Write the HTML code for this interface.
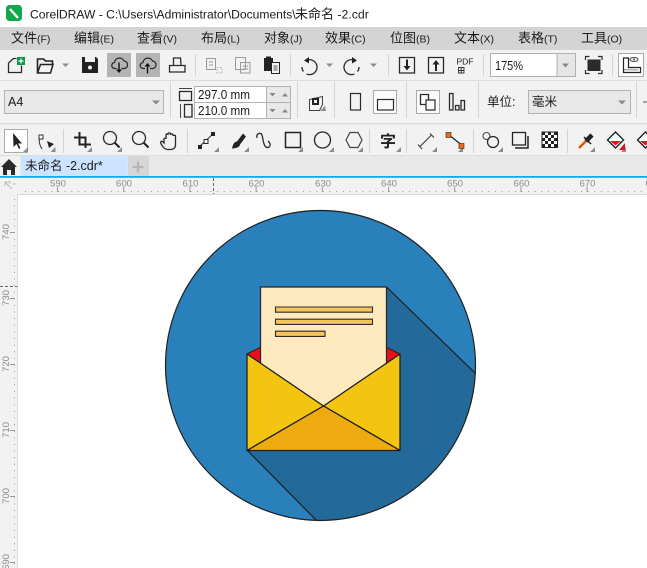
<!DOCTYPE html>
<html><head><meta charset="utf-8">
<style>
html,body{margin:0;padding:0;background:#fff;width:647px;height:568px;overflow:hidden}
svg{display:block}
text{font-family:"Liberation Sans","Noto Sans CJK SC",sans-serif;fill:#1a1a1a}
.m{font-size:13px}
.m tspan{font-size:10.5px}
.r{font-size:9.6px;fill:#8a8a94}
.f{fill:none;stroke:#2a2a2a;stroke-width:1.3}
.g{fill:none;stroke:#9a9a9a;stroke-width:1}
</style></head><body>
<svg width="647" height="568" viewBox="0 0 647 568" xmlns="http://www.w3.org/2000/svg">
<defs><clipPath id="c"><circle cx="320.5" cy="365.5" r="155"/></clipPath>
<pattern id="chk" width="6" height="6" patternUnits="userSpaceOnUse" x="542" y="132"><rect width="6" height="6" fill="#fff"/><rect width="3" height="3" fill="#222"/><rect x="3" y="3" width="3" height="3" fill="#222"/></pattern></defs>
<rect width="647" height="568" fill="#fff"/>

<!-- title bar -->
<rect x="6" y="5" width="16" height="16" rx="3.5" fill="#11a84a"/>
<path d="M10 9l8 9" stroke="#fff" stroke-width="2.4"/>
<text x="30" y="18.500" font-size="12.1">CorelDRAW - C:\Users\Administrator\Documents\</text>
<text x="295" y="18.500" font-size="13">未命名</text>
<text x="334" y="18.500" font-size="12.300" xml:space="preserve"> -2.cdr</text>

<!-- menu -->
<rect y="27" width="647" height="23" fill="#d4d4d4"/>
<text class="m" x="11" y="42.500">文件<tspan>(F)</tspan></text>
<text class="m" x="74" y="42.500">编辑<tspan>(E)</tspan></text>
<text class="m" x="137" y="42.500">查看<tspan>(V)</tspan></text>
<text class="m" x="201" y="42.500">布局<tspan>(L)</tspan></text>
<text class="m" x="264" y="42.500">对象<tspan>(J)</tspan></text>
<text class="m" x="325" y="42.500">效果<tspan>(C)</tspan></text>
<text class="m" x="390" y="42.500">位图<tspan>(B)</tspan></text>
<text class="m" x="454" y="42.500">文本<tspan>(X)</tspan></text>
<text class="m" x="518" y="42.500">表格<tspan>(T)</tspan></text>
<text class="m" x="581" y="42.500">工具<tspan>(O)</tspan></text>

<!-- toolbars bg -->
<rect y="50" width="647" height="105" fill="#f2f2f2"/>
<rect y="80" width="647" height="1" fill="#dcdcdc"/>
<rect y="123" width="647" height="1.500" fill="#dcdcdc"/>
<rect y="155" width="647" height="1" fill="#dcdcdc"/>

<!-- separators -->
<path d="M195.500 54v22M290.500 54v22M388.500 54v22M483.500 54v22M612.500 54v22M170.500 82v36M297.500 82v36M334.500 82v36M406.500 82v36M478.500 82v36M636.500 82v36M63.500 129v24M187.500 129v24M369.500 129v24M406.500 129v24M473.500 129v24M567.500 129v24" stroke="#d2d2d2" stroke-width="1" fill="none"/>

<!-- row 1 -->
<path class="f" d="M8.500 63l5-4.500h3M8.500 63v9.500h13v-7"/>
<rect x="17" y="57" width="8" height="8" fill="#0a9a48"/><path d="M21 58.500v5M18.500 61h5" stroke="#fff" stroke-width="1.200"/>
<path d="M37.500 73V59h6l2 2h7v3" fill="none" stroke="#222" stroke-width="1.600"/><path d="M37.500 73l3-8.500h12.500l-2.500 8.500z" fill="#f2f2f2" stroke="#222" stroke-width="1.500"/>
<path d="M62 63.500h7l-3.500 3.500z" fill="#8a8a8a"/>
<path d="M82 57h14l2 2v14H82z" fill="#222"/><rect x="85" y="57" width="10" height="5" fill="#f2f2f2"/><circle cx="90" cy="67.500" r="2" fill="#f2f2f2"/>
<rect x="107" y="53" width="24" height="24" fill="#b4b4b4"/>
<rect x="136" y="53" width="24" height="24" fill="#b4b4b4"/>
<g transform="translate(.5,1.500)"><path class="f" d="M116 67h-1.500a3 3 0 0 1 -.5-6a5 5 0 0 1 9.500-1.500a3.800 3.800 0 0 1 .5 7.500h-3"/>
<path d="M118.500 61v9" stroke="#111" stroke-width="1.400"/><path d="M115.500 68l3 3.500 3-3.500z" fill="#111"/></g>
<g transform="translate(29,1.500)"><path class="f" d="M116 67h-1.500a3 3 0 0 1 -.5-6a5 5 0 0 1 9.500-1.500a3.800 3.800 0 0 1 .5 7.500h-3"/>
<path d="M118.500 63v9" stroke="#111" stroke-width="1.400"/><path d="M115.500 65l3-3.500 3 3.500z" fill="#111"/></g>
<path class="f" d="M173.500 65v-7h7l.5 7M169.500 65.500h15.500v6.500h-15.500z"/>
<path class="g" d="M206.500 58.500h9v11h-9zM209 62h4M209 65h4"/><path d="M217 67.500h5v5.500h-5z" fill="none" stroke="#aaa" stroke-dasharray="1.500 1.500"/>
<path class="g" d="M235.500 57.500h10v12h-10zM240.500 62.500h9.500v10.500h-9.500zM243 66h5M243 69h5"/>
<rect x="264" y="58" width="9" height="13" fill="#222"/><rect x="266" y="56.500" width="5" height="3" fill="#222"/>
<rect x="271.500" y="62.500" width="8" height="11" fill="#f2f2f2" stroke="#222"/><path d="M273.500 66h4M273.500 68h4M273.500 70h4" stroke="#222" stroke-width=".8"/>
<path class="f" d="M306 60.500a7.500 7.500 0 1 1 -4 6.500" stroke-dasharray="30 4"/><path d="M309 57l-5 3.500 5 3z" fill="#222"/>
<path d="M326 63.500h7l-3.500 3.500z" fill="#8a8a8a"/>
<path class="f" d="M355 60.500a7.500 7.500 0 1 0 4 6.500" stroke-dasharray="30 4"/><path d="M352 57l5 3.500-5 3z" fill="#222"/>
<path d="M370 63.500h7l-3.500 3.500z" fill="#8a8a8a"/>
<path class="f" d="M399.500 57.500h15v15.500h-15z"/><path d="M407 59.500v8" stroke="#222" stroke-width="2"/><path d="M403.500 66l3.500 4.500 3.500-4.500z" fill="#222"/>
<path class="f" d="M428.500 57.500h15v15.500h-15z"/><path d="M436 63v8" stroke="#222" stroke-width="2"/><path d="M432.500 64.500l3.500-4.500 3.500 4.500z" fill="#222"/>
<text x="456.500" y="64.500" font-size="8.500">PDF</text><path d="M458.500 67.500h5.500v5.500h-5.500zM461.200 67.500v5.500M458.500 70.500h5.500" fill="none" stroke="#333" stroke-width=".9"/>
<rect x="490.500" y="53.500" width="85" height="23" fill="#fff" stroke="#b0b0b0"/><rect x="557" y="54" width="18" height="22" fill="#e6e6e6"/><path d="M557 54v22" stroke="#b0b0b0"/>
<path d="M562 63.500h7l-3.500 4z" fill="#888"/>
<text x="495" y="70" font-size="12.500" textLength="28" lengthAdjust="spacingAndGlyphs">175%</text>
<rect x="587.500" y="59.500" width="13" height="11.500" fill="#2a2a2a"/><path d="M585.500 60v-3.500h4M598 56.500h4v3.500M585.500 70v3.500h4M598 73.500h4V70" fill="none" stroke="#2a2a2a" stroke-width="1.200"/>
<rect x="618.500" y="53.500" width="25" height="23" fill="#fdfdfd" stroke="#aaa"/>
<path d="M623.500 58v14.500h17v-5h-12v-9.500z" fill="none" stroke="#222" stroke-width="1.200"/><path d="M625 70.500v-1.500M627 70.500v-1.500M629 70.500v-1.500M631 70.500v-1.500M633 70.500v-1.500M635 70.500v-1.500M637 70.500v-1.500" stroke="#222" stroke-width=".7"/><ellipse cx="634" cy="59.500" rx="4" ry="2" fill="none" stroke="#444"/><circle cx="634" cy="59.500" r="1" fill="#444"/>

<!-- row 2 -->
<rect x="4.500" y="90.500" width="159" height="23" fill="#e8e8e8" stroke="#b2b2b2"/>
<text x="8" y="106" font-size="12.500">A4</text>
<path d="M152 100.500h8l-4 4z" fill="#888"/>
<path class="f" d="M179.500 91.500h12v9h-12z"/><path d="M179 88.500h13" stroke="#444"/>
<path class="f" d="M184.500 104.500h7.500v12.500h-7.500z"/><path d="M180.500 104v14" stroke="#444"/>
<rect x="194.500" y="86.500" width="96" height="32" fill="#e8e8e8" stroke="#b2b2b2"/>
<rect x="195" y="87" width="71" height="15" fill="#fff"/><rect x="195" y="103" width="71" height="15" fill="#fff"/>
<path d="M195 102.500h95M266.500 87v31" stroke="#b2b2b2"/>
<text x="198" y="99" font-size="12.500" textLength="52" lengthAdjust="spacingAndGlyphs">297.0 mm</text>
<text x="198" y="115" font-size="12.500" textLength="52" lengthAdjust="spacingAndGlyphs">210.0 mm</text>
<path d="M269.500 93h6l-3 3.500zM269.500 109h6l-3 3.500z" fill="#888"/><path d="M282 96.500h6l-3-3.500zM282 112.500h6l-3-3.500z" fill="#888"/>
<path d="M309.500 99.500l13-3v8l-3 6h-10z" fill="none" stroke="#444"/><rect x="312" y="98" width="7" height="7" fill="#222"/><rect x="314" y="100" width="3" height="3" fill="#f2f2f2"/>
<path d="M320 111l5-5 1 5z" fill="#8c8c8c"/>
<rect x="350.500" y="93.500" width="10" height="16.500" fill="none" stroke="#2a2a2a" stroke-width="1.200"/>
<rect x="373.500" y="90.500" width="23" height="23" fill="#fbfbfb" stroke="#aaa"/>
<rect x="377.500" y="99.500" width="16" height="10.500" fill="none" stroke="#2a2a2a" stroke-width="1.200"/>
<rect x="416.500" y="90.500" width="23" height="23" fill="#fbfbfb" stroke="#aaa"/>
<path class="f" d="M420.500 94.500h8v10h-8z"/><path d="M426 100h9v10h-9z" fill="#fbfbfb" stroke="#2a2a2a" stroke-width="1.200"/>
<path class="f" d="M449.500 93.500h3.500v16.500h-3.500zM455.500 105.500h3.500v4.500h-3.500zM461 100.500h3.500v9.500H461z"/>
<text x="487" y="106" font-size="12.500">单位:</text>
<rect x="528.500" y="90.500" width="102" height="23" fill="#e8e8e8" stroke="#b2b2b2"/>
<text x="532" y="106" font-size="12.500">毫米</text>
<path d="M618 100.500h8l-4 4z" fill="#888"/>
<path d="M643 102h4" stroke="#555"/>

<!-- row 3 -->
<rect x="4.500" y="129.500" width="23" height="23" fill="#fff" stroke="#aaa"/>
<path d="M13 133l.500 14 3-3 2.500 5 1.500-1-2.500-4.500h4z" fill="#222"/>
<g fill="#8c8c8c">
<path d="M23 152l5-5v5zM50.500 152l5-5v5zM87 152l5-5v5zM117 152l5-5v5zM214 152l5-5v5zM244 152l5-5v5zM298 152l5-5v5zM329 152l5-5v5zM358 152l5-5v5zM396 152l5-5v5zM432 152l5-5v5zM458 152l5-5v5zM498 152l5-5v5zM590 152l5-5v5zM621 152l5-5v5z"/>
</g>
<path d="M40 137c-1.500 3-1 7 2 12" fill="none" stroke="#333"/><rect x="39" y="135" width="4" height="4" fill="#fff" stroke="#333"/><path d="M47 141l7 3-5 4z" fill="#222"/>
<path d="M74 137.500H85.500V148M79.500 132V144.500H91" fill="none" stroke="#222" stroke-width="2"/>
<circle cx="110" cy="138" r="6.500" class="f"/><path d="M114.500 142.500l5 5" stroke="#222" stroke-width="2"/>
<circle cx="139" cy="138" r="6.500" class="f"/><path d="M143.500 142.500l5 5" stroke="#222" stroke-width="2"/>
<path class="f" transform="translate(-1,0)" d="M165 143v-4c0-1 2-1 2 0v-4c0-1.500 2-1.500 2 0v-1c0-1.500 2.500-1.500 2.500 0v1c0-1.500 2.500-1.500 2.500 0v1c0-1 2.500-1 2.500 0v9c0 3-2.500 4.500-5 4.500h-3c-3 0-6-4-7-7 0-1 1-1.500 2-1z"/>
<path d="M199 147l15-14" stroke="#333"/><rect x="198" y="145" width="4" height="4" fill="#222"/><rect x="204" y="139.500" width="4" height="4" fill="#fff" stroke="#222"/><rect x="211" y="132" width="4" height="4" fill="#222"/>
<path d="M243 133.500l-6 8c-2 0-4 2-5 7 5 0 8-2 8-4l6-8z" fill="#222"/>
<path class="f" d="M257 138c-1-5 4-6 5-3 1 3 1 8 3 11 2 3 6 1 5-2 0-1-1-2-2-3" stroke-width="1.500"/>
<rect x="285.500" y="132.500" width="15" height="15" fill="none" stroke="#222" stroke-width="1.500"/>
<circle cx="322.500" cy="140" r="8" fill="none" stroke="#222" stroke-width="1.300"/>
<path d="M346 140l4-7.500h8l4 7.500-4 7.500h-8z" fill="none" stroke="#444" stroke-width="1.200"/>
<text x="380" y="147" font-size="16" font-weight="bold" style="fill:#222">字</text>
<path d="M419.500 147l12-12M418 144.500l4 4.500M430 133.500l4 4" stroke="#444" stroke-width="1.200"/>
<path d="M449 135l14 11" stroke="#222" stroke-width="1.200"/><rect x="446" y="132.500" width="5" height="5" fill="#f26c0d" stroke="#222" stroke-width=".6"/><rect x="459" y="143.500" width="5" height="5" fill="#f26c0d" stroke="#222" stroke-width=".6"/>
<circle cx="486.500" cy="136" r="3.500" fill="none" stroke="#444"/><circle cx="493" cy="142" r="5.500" fill="#f2f2f2" stroke="#222" stroke-width="1.200"/>
<rect x="512.500" y="132.500" width="13" height="12.500" fill="none" stroke="#222" stroke-width="1.300"/><path d="M528 136v12h-13" fill="none" stroke="#222" stroke-width="1.500"/>
<rect x="542" y="132" width="15.500" height="15.500" fill="url(#chk)" stroke="#222"/>
<path d="M579 148l8-8" stroke="#d85c10" stroke-width="2.600"/><path d="M586 141l6-6" stroke="#222" stroke-width="4.500"/><path d="M584 137l7 7" stroke="#222" stroke-width="1.500"/>
<path d="M607.500 140l8-8 8 8-8 8z" fill="#fff" stroke="#222" stroke-width="1.400"/><path d="M610 141h11l-5.500 4.500z" fill="#e8101c"/>
<path d="M619 150l6-7v7z" fill="#e8101c"/>
<path d="M637.500 140l8-8 8 8-8 8z" fill="#fff" stroke="#222" stroke-width="1.400"/><path d="M640 141h11l-5.500 4.500z" fill="#e8101c"/>

<!-- tabs -->
<rect y="156" width="647" height="20" fill="#e8e8e8"/>
<rect x="0" y="156" width="20" height="20" fill="#f2f2f2"/>
<path d="M1 167l8-8 8 8h-2v8h-4v-5h-4v5H3v-8z" fill="#2a2a2a"/>
<rect x="21" y="156" width="106.500" height="20" fill="#cce4ff"/>
<text x="25" y="170" font-size="12.500">未命名 -2.cdr*</text>
<rect x="128" y="156" width="21" height="20" fill="#d6d6d6"/>
<path d="M138 161.500v11M132.500 167h11" stroke="#b5b5b5" stroke-width="2.200"/>
<rect x="0" y="176" width="647" height="1.800" fill="#12a8ef"/>

<!-- rulers -->
<rect y="178" width="647" height="16" fill="#f2f2f2"/>
<rect y="178" width="18" height="390" fill="#f2f2f2"/>
<rect x="17" y="194" width="1" height="374" fill="#d8d8d8"/>
<rect x="18" y="194" width="629" height="1" fill="#d8d8d8"/>
<path d="M5 182l7 7M5 182v4M5 182h4M10 181v3M13 184h3" fill="none" stroke="#999" stroke-dasharray="1 .6"/>
<path d="M24 191.500H647" stroke="#999" stroke-dasharray="1 5.620" stroke-dashoffset="-1"/>
<path d="M57 189.500H647" stroke="#999" stroke-width="5" stroke-dasharray="1 65.200"/>
<path d="M213.500 178v16" stroke="#666" stroke-dasharray="3 2"/>
<path d="M14.500 199V568" stroke="#999" stroke-dasharray="1 5.620"/>
<path d="M10 232.500H15M10 298.500H15M10 364.500H15M10 430.500H15M10 496.500H15M10 562.500H15" stroke="#999"/>
<path d="M0 286.500H17" stroke="#666" stroke-dasharray="3 2"/>
<text class="r" x="50" y="186.500">590</text><text class="r" x="116" y="186.500">600</text><text class="r" x="182.500" y="186.500">610</text><text class="r" x="248.500" y="186.500">620</text><text class="r" x="315" y="186.500">630</text><text class="r" x="381" y="186.500">640</text><text class="r" x="447" y="186.500">650</text><text class="r" x="513.500" y="186.500">660</text><text class="r" x="579.500" y="186.500">670</text><text class="r" x="645.500" y="186.500">680</text>
<text class="r" transform="translate(9,240) rotate(-90)">740</text>
<text class="r" transform="translate(9,306) rotate(-90)">730</text>
<text class="r" transform="translate(9,372) rotate(-90)">720</text>
<text class="r" transform="translate(9,438) rotate(-90)">710</text>
<text class="r" transform="translate(9,504) rotate(-90)">700</text>
<text class="r" transform="translate(9,570) rotate(-90)">690</text>

<!-- artwork -->
<circle cx="320.500" cy="365.500" r="155" fill="#2980ba"/>
<g clip-path="url(#c)"><path d="M386.500 287L500 398V568H365L247 450z" fill="#236a9a"/>
<path d="M386.500 287L476 374M247 450l71 72" stroke="#1f1f1f" stroke-width="1.200" fill="none"/></g>
<circle cx="320.500" cy="365.500" r="155" fill="none" stroke="#1f1f1f" stroke-width="1.200"/>
<path d="M247 354l14-7h125l14 7v20H247z" fill="#e8101c" stroke="#1f1f1f"/>
<rect x="260.500" y="287" width="126" height="130" fill="#ffe9bf" stroke="#2a2a2a" stroke-width="1.300"/>
<path d="M275.500 307h97v5.200h-97zM275.500 319.200h97v5.200h-97zM275.500 331.200h49.500v5.200h-49.500z" fill="#f5c55a" stroke="#2a2a2a" stroke-width="1.100"/>
<path d="M247 354l76.500 52L247 450.500z" fill="#f3c511" stroke="#1f1f1f" stroke-width="1.300" stroke-linejoin="round"/>
<path d="M400 354l-76.500 52 76.500 44.500z" fill="#f3c511" stroke="#1f1f1f" stroke-width="1.300" stroke-linejoin="round"/>
<path d="M247 450.500l76.500-44.500 76.500 44.500z" fill="#edab10" stroke="#1f1f1f" stroke-width="1.300" stroke-linejoin="round"/>
</svg>
</body></html>
